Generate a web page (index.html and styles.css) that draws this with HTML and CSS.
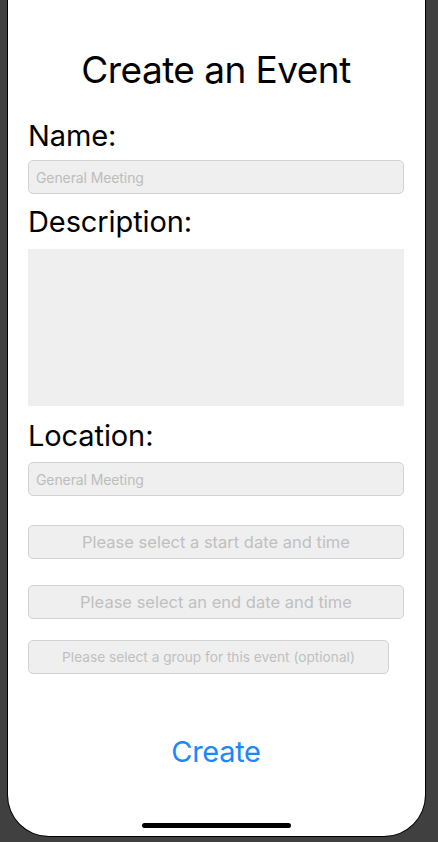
FILE: index.html
```html
<!DOCTYPE html>
<html>
<head>
<meta charset="utf-8">
<link rel="stylesheet" href="styles.css">
</head>
<body>
<div class="device">
  <div class="screen">
    <h1 class="title">Create an Event</h1>
    <label class="label label-name">Name:</label>
    <div class="field"><span class="placeholder">General Meeting</span></div>
    <label class="label label-desc">Description:</label>
    <div class="textarea"></div>
    <label class="label label-loc">Location:</label>
    <div class="field field-loc"><span class="placeholder">General Meeting</span></div>
    <div class="picker picker-start">Please select a start date and time</div>
    <div class="picker picker-end">Please select an end date and time</div>
    <div class="picker picker-group">Please select a group for this event (optional)</div>
    <div class="create">Create</div>
    <div class="home-indicator"></div>
  </div>
</div>
</body>
</html>
```

FILE: styles.css
```css
html, body {
  margin: 0;
  padding: 0;
  background: #404040;
  height: 842px;
  overflow: hidden;
}
.device {
  margin-left: 7px;
  background: #000;
  border-radius: 0 0 42px 42px;
  padding: 0 1px 1px 1px;
  box-sizing: border-box;
  width: 419px;
  height: 837px;
}
.screen {
  background: #fff;
  height: 100%;
  border-radius: 0 0 41px 41px;
  box-sizing: border-box;
  padding: 0 0 0 20px;
  display: flex;
  flex-direction: column;
  font-family: Inter, "Noto Sans", sans-serif;
  color: #000;
}
.title {
  margin: 47px 0 0 0;
  width: 376px;
  text-align: center;
  font-weight: 400;
  font-size: 37px;
  line-height: 46px;
  letter-spacing: -0.55px;
}
.label {
  display: block;
  font-size: 29px;
  line-height: 36px;
  letter-spacing: -0.1px;
}
.label-name { margin-top: 25px; }
.label-desc { margin-top: 10px; }
.label-loc { margin-top: 12px; }
.field {
  margin-top: 6px;
  width: 376px;
  height: 34px;
  box-sizing: border-box;
  background: #efefef;
  border: 1px solid #d2d2d2;
  border-radius: 5px;
  display: flex;
  align-items: center;
  padding-left: 7px;
}
.field-loc { margin-top: 8px; }
.placeholder {
  font-size: 14px;
  color: #bdbdbd;
  letter-spacing: -0.1px;
}
.textarea {
  margin-top: 9px;
  width: 376px;
  height: 157px;
  background: #efefef;
}
.picker {
  width: 376px;
  height: 34px;
  box-sizing: border-box;
  background: #efefef;
  border: 1px solid #d2d2d2;
  border-radius: 5px;
  display: flex;
  align-items: center;
  justify-content: center;
  color: #c0c0c0;
  font-size: 16.5px;
}
.picker-start { margin-top: 29px; }
.picker-end { margin-top: 26px; }
.picker-group {
  margin-top: 21px;
  width: 361px;
  font-size: 13.7px;
}
.create {
  margin-top: 60px;
  width: 376px;
  text-align: center;
  color: #1a88ff;
  font-size: 29px;
  line-height: 36px;
  letter-spacing: -0.3px;
}
.home-indicator {
  margin: auto 0 8px 114px;
  width: 149px;
  height: 5px;
  border-radius: 3px;
  background: #000;
}
```
